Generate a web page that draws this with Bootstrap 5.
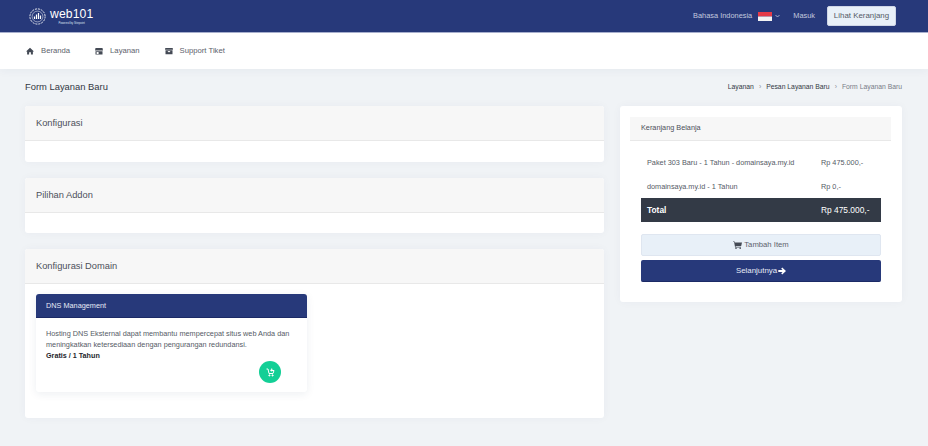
<!DOCTYPE html>
<html lang="id">
<head>
<meta charset="utf-8">
<title>Form Layanan Baru</title>
<link rel="stylesheet" href="https://cdn.jsdelivr.net/npm/bootstrap@5.3.0/dist/css/bootstrap.min.css">
<style>
html,body{height:446px;overflow:hidden}
body{background:#f0f3f6;font-family:"Liberation Sans",Arial,sans-serif;font-size:7.3px;color:#555b66;line-height:1.5}
a{text-decoration:none;color:inherit}
.topbar{height:33px;background:#27397a;border-bottom:1px solid #a9b1cf;padding:0 32px 0 29px}
.logo-word{font-size:12.2px;color:#fff;line-height:13px;letter-spacing:.1px}
.logo-sub{font-size:2.8px;color:#dfe3f0;line-height:4px;text-align:center}
.top-link{color:#c3c9df;font-size:7.4px}
.flag{width:14px;height:9px;display:block;margin-left:6px}
.caret-mark{margin-left:3px}
.login-link{margin-left:13px}
.cart-btn{background:#e8f0f8;border:1px solid #cfd6e6;border-radius:2px;color:#555b66;font-size:7.9px;width:69px;height:20px;line-height:18px;text-align:center;margin-left:12px}
.subnav{height:36px;background:#fff;padding:0 25px 0 26px;gap:25px;box-shadow:0 3px 8px rgba(30,50,90,.04)}
.subnav a{color:#5d626c;font-size:7.7px;gap:7px}
.page-head{height:37px;padding:0 26px 0 25px}
.page-name{font-size:9.4px;color:#333844}
.crumbs{font-size:6.8px;color:#333844;gap:5px}
.crumbs .sep{color:#8b909a}
.crumbs .now{color:#777c86}
.main-row{padding:0 26px 0 25px;gap:16px}
.left-col{width:579px}
.right-col{width:282px}
.panel{background:#fff;border:0;border-radius:3px;box-shadow:0 0 10px rgba(30,50,90,.04)}
.panel-head{height:35px;background:#f7f7f7;border-bottom:1px solid #e8e8e8;padding:2px 11px 0;font-size:9.3px;color:#4c505a;border-radius:3px 3px 0 0}
.blank-a{height:21px}
.blank-b{height:20px}
.gap-panel{margin-bottom:16px}
.panel-tall{height:169px;padding:0}
.dns-card{width:271px;height:98px;margin:10px 0 0 11px;border-radius:3px;background:#fff;box-shadow:0 2px 8px rgba(30,50,90,.08);position:relative}
.dns-head{height:24px;background:#27397a;border-bottom:1px solid #1b2a66;color:#e6eaf5;font-size:7.3px;padding:2px 10px 0;border-radius:3px 3px 0 0}
.dns-body{padding:10px 10px 0;font-size:7.3px;line-height:11px;color:#555b66}
.dns-body b{color:#25272c;font-size:7.2px}
.buy-round{position:absolute;left:223px;top:67px;width:22px;height:22px;border-radius:50%;background:#13cf96}
.side-panel{height:196px;padding:11px 11px 0 10px}
.side-head{height:24px;background:#f7f7f7;border-bottom:1px solid #e8e8e8;padding:0 11px;font-size:7.3px;color:#4c505a}
.cart-lines{margin:9px 10px 0 11px}
.cart-line{height:24px;padding:2px 6px 0}
.cart-line .nm{width:174px;flex:none}
.cart-total{height:24px;background:#333a46;color:#fff;font-size:8.4px;padding:0 6px}
.cart-total .nm{width:174px;flex:none;font-weight:700;font-size:8.4px}
.act-add{display:flex;height:22px;margin:12px 10px 0 11px;background:#e8f0f8;border:1px solid #dfe6f0;border-radius:2px;color:#5d626c;font-size:7.7px;gap:2px}
.act-next{display:flex;height:22px;margin:4px 10px 0 11px;background:#27397a;border:0;border-bottom:1px solid #1b2a66;border-radius:2px;color:#e6eaf5;font-size:7.9px;gap:1px}
</style>
</head>
<body>
<header class="topbar d-flex align-items-center justify-content-between">
  <a href="#" class="d-flex align-items-center gap-1">
    <svg width="17" height="17" viewBox="0 0 17 17" fill="none" stroke="#fff"><circle cx="8.5" cy="8.5" r="7.6" stroke-width=".9" stroke-dasharray="2 1"/><circle cx="8.5" cy="8.5" r="5.4" stroke-width=".5"/><path d="M5.5 11V8.5M7.5 11V6.5M9.5 11V5M11.5 11V7.5" stroke-width="1.2"/></svg>
    <span class="d-block">
      <span class="logo-word d-block">web101</span>
      <span class="logo-sub d-block">Powered by Sitepoint</span>
    </span>
  </a>
  <div class="d-flex align-items-center">
    <a href="#" class="top-link">Bahasa Indonesia</a>
    <svg class="flag" viewBox="0 0 14 9"><rect width="14" height="4.5" fill="#e53b48"/><rect y="4.5" width="14" height="4.5" fill="#f4f4f4"/></svg>
    <svg class="caret-mark" width="5" height="4" viewBox="0 0 5 4" fill="none" stroke="#c3c9df"><path d="M.5 1 2.5 3 4.5 1" stroke-width=".8"/></svg>
    <a href="#" class="top-link login-link">Masuk</a>
    <a href="#" class="cart-btn d-block">Lihat Keranjang</a>
  </div>
</header>
<nav class="subnav d-flex align-items-center">
  <a href="#" class="d-flex align-items-center">
    <svg width="8" height="8" viewBox="0 0 8 8" fill="#444a55"><path d="M4 .8 0 4.4h1.1V7.6h2V5.2h1.8v2.4h2V4.4H8z"/></svg>Beranda</a>
  <a href="#" class="d-flex align-items-center">
    <svg width="8" height="8" viewBox="0 0 8 8" fill="#444a55"><path d="M.5 1h7l.5 2.6H0zM.5 4.2h7V7.5H.5zM1.6 5v2h2V5z" fill-rule="evenodd"/></svg>Layanan</a>
  <a href="#" class="d-flex align-items-center">
    <svg width="8" height="8" viewBox="0 0 8 8" fill="#444a55"><path d="M.3 1h7.4l.3 1.8H0zM.5 3.3h7v4H.5zM2.5 4l1.5 1.5L5.5 4z" fill-rule="evenodd"/></svg>Support Tiket</a>
</nav>
<section class="page-head d-flex align-items-center justify-content-between">
  <div class="page-name">Form Layanan Baru</div>
  <div class="crumbs d-flex align-items-center">
    <a href="#">Layanan</a><span class="sep">›</span><a href="#">Pesan Layanan Baru</a><span class="sep">›</span><span class="now">Form Layanan Baru</span>
  </div>
</section>
<main class="main-row d-flex align-items-start">
  <div class="left-col">
    <div class="panel gap-panel">
      <div class="panel-head d-flex align-items-center">Konfigurasi</div>
      <div class="blank-a"></div>
    </div>
    <div class="panel gap-panel">
      <div class="panel-head d-flex align-items-center">Pilihan Addon</div>
      <div class="blank-b"></div>
    </div>
    <div class="panel panel-tall">
      <div class="panel-head d-flex align-items-center">Konfigurasi Domain</div>
      <div class="dns-card">
        <div class="dns-head d-flex align-items-center">DNS Management</div>
        <div class="dns-body">Hosting DNS Eksternal dapat membantu mempercepat situs web Anda dan meningkatkan ketersediaan dengan pengurangan redundansi.<br><b>Gratis / 1 Tahun</b></div>
        <a href="#" class="buy-round d-flex align-items-center justify-content-center">
          <svg width="9" height="9" viewBox="0 0 9 9" fill="none" stroke="#fff" stroke-width="1"><path d="M.5 1H2l1 4.5h4L8 2.5H4.5M5.7.5v3M4.5 2.2h2.4"/><circle cx="3.4" cy="7.4" r=".6" fill="#fff"/><circle cx="6.6" cy="7.4" r=".6" fill="#fff"/></svg>
        </a>
      </div>
    </div>
  </div>
  <aside class="right-col panel side-panel">
    <div class="side-head d-flex align-items-center">Keranjang Belanja</div>
    <div class="cart-lines">
      <div class="cart-line d-flex align-items-center"><span class="nm">Paket 303 Baru - 1 Tahun - domainsaya.my.id</span><span>Rp 475.000,-</span></div>
      <div class="cart-line d-flex align-items-center"><span class="nm">domainsaya.my.id - 1 Tahun</span><span>Rp 0,-</span></div>
      <div class="cart-total d-flex align-items-center"><span class="nm">Total</span><span>Rp 475.000,-</span></div>
    </div>
    <a href="#" class="act-add align-items-center justify-content-center">
      <svg width="9" height="8" viewBox="0 0 9 8" fill="#444a55"><path d="M0 .4h1.6l.3 1H9L8.2 5H2.5l.2.8H8v.6H2.1L1.1 1H0z"/><circle cx="3" cy="7.2" r=".8"/><circle cx="7.2" cy="7.2" r=".8"/></svg>Tambah Item</a>
    <a href="#" class="act-next align-items-center justify-content-center">Selanjutnya<svg width="8" height="8" viewBox="0 0 8 8" fill="#fff"><path d="M4.2.6 8 4 4.2 7.4 3.2 6.3 4.6 5H.3V3h4.3L3.2 1.7z"/></svg></a>
  </aside>
</main>
<script src="https://cdn.jsdelivr.net/npm/bootstrap@5.3.0/dist/js/bootstrap.bundle.min.js"></script>
</body>
</html>
